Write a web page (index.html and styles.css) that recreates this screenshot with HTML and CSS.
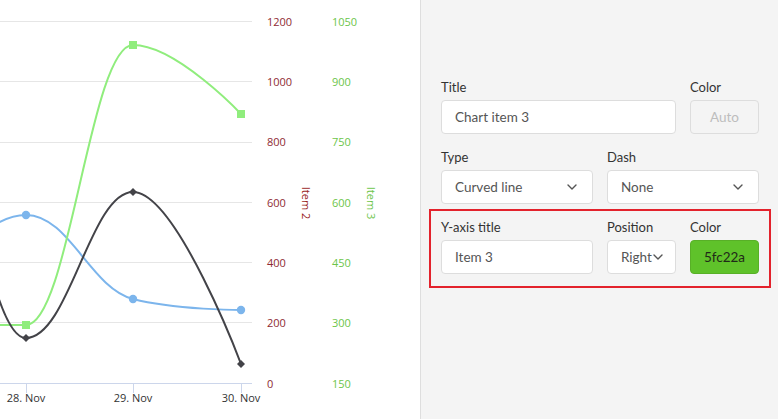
FILE: index.html
```html
<!DOCTYPE html>
<html>
<head>
<meta charset="utf-8">
<link rel="stylesheet" href="styles.css">
</head>
<body>
<div class="page">
  <div class="chart">
    <svg class="chart-svg" width="420" height="419" viewBox="0 0 420 419">
      <g class="grid">
        <line x1="0" y1="21.5" x2="252" y2="21.5"/>
        <line x1="0" y1="81.5" x2="252" y2="81.5"/>
        <line x1="0" y1="142.5" x2="252" y2="142.5"/>
        <line x1="0" y1="202.5" x2="252" y2="202.5"/>
        <line x1="0" y1="262.5" x2="252" y2="262.5"/>
        <line x1="0" y1="322.5" x2="252" y2="322.5"/>
      </g>
      <g class="axis">
        <line x1="0" y1="383.5" x2="252" y2="383.5"/>
        <line x1="26.5" y1="383" x2="26.5" y2="393"/>
        <line x1="133.5" y1="383" x2="133.5" y2="393"/>
        <line x1="241.5" y1="383" x2="241.5" y2="393"/>
      </g>
      <g class="xlabels">
        <text x="26" y="402">28. Nov</text>
        <text x="133" y="402">29. Nov</text>
        <text x="241" y="402">30. Nov</text>
      </g>
      <g class="ylabels y2">
        <text x="267" y="26">1200</text>
        <text x="267" y="86">1000</text>
        <text x="267" y="146">800</text>
        <text x="267" y="207">600</text>
        <text x="267" y="267">400</text>
        <text x="267" y="327">200</text>
        <text x="267" y="388">0</text>
      </g>
      <g class="ylabels y3">
        <text x="332" y="26">1050</text>
        <text x="332" y="86">900</text>
        <text x="332" y="146">750</text>
        <text x="332" y="207">600</text>
        <text x="332" y="267">450</text>
        <text x="332" y="327">300</text>
        <text x="332" y="388">150</text>
      </g>
      <text class="atitle t2" transform="translate(302 203) rotate(90)">Item 2</text>
      <text class="atitle t3" transform="translate(367 203) rotate(90)">Item 3</text>

      <path class="s-blue" d="M -81.5 270 C -38.5 270 -17 215 26 215 C 69 215 90.2 288 133 299 C 176.2 310 241 310 241 310"/>
      <path class="s-green" d="M -81.5 325 C -38.5 325 -17 325 26 325 C 69 325 90.2 45 133 45 C 176.2 45 241 114 241 114"/>
      <path class="s-black" d="M -81.5 55 C -38.5 55 -17 338 26 338 C 69 338 90.2 192 133 192 C 176.2 192 241 364 241 364"/>

      <g class="m-blue">
        <circle cx="26" cy="215" r="4.2"/>
        <circle cx="133" cy="299" r="4.2"/>
        <circle cx="241" cy="310" r="4.2"/>
      </g>
      <g class="m-green">
        <rect x="22" y="321" width="8" height="8"/>
        <rect x="129" y="41" width="8" height="8"/>
        <rect x="237" y="110" width="8" height="8"/>
      </g>
      <g class="m-black">
        <path d="M26 334 L30 338 L26 342 L22 338 Z"/>
        <path d="M133 188 L137 192 L133 196 L129 192 Z"/>
        <path d="M241 360 L245 364 L241 368 L237 364 Z"/>
      </g>
    </svg>
  </div>

  <div class="panel">
    <div class="form">
      <div class="field span2">
        <label class="lbl">Title</label>
        <div class="input">Chart item 3</div>
      </div>
      <div class="field">
        <label class="lbl">Color</label>
        <div class="input disabled">Auto</div>
      </div>

      <div class="field">
        <label class="lbl">Type</label>
        <div class="input select">Curved line
          <svg class="chev" width="10" height="6" viewBox="0 0 10 6"><path d="M1 1 L5 5 L9 1"/></svg>
        </div>
      </div>
      <div class="field span2">
        <label class="lbl">Dash</label>
        <div class="input select">None
          <svg class="chev" width="10" height="6" viewBox="0 0 10 6"><path d="M1 1 L5 5 L9 1"/></svg>
        </div>
      </div>

      <div class="highlight">
        <div class="field">
          <label class="lbl">Y-axis title</label>
          <div class="input">Item 3</div>
        </div>
        <div class="field">
          <label class="lbl">Position</label>
          <div class="input select narrow">Right<svg class="chev-inline" width="10" height="6" viewBox="0 0 10 6"><path d="M1 1 L5 5 L9 1"/></svg></div>
        </div>
        <div class="field">
          <label class="lbl">Color</label>
          <div class="input swatch">5fc22a</div>
        </div>
      </div>
    </div>
  </div>
</div>
</body>
</html>
```

FILE: styles.css
```css
* { box-sizing: border-box; }
html, body { margin: 0; padding: 0; }
body {
  width: 778px;
  height: 419px;
  overflow: hidden;
  background: #ffffff;
  font-family: "Lato", "Noto Sans", sans-serif;
}
.page {
  display: flex;
  height: 419px;
}
.chart {
  width: 420px;
  flex: none;
  background: #ffffff;
}
.chart-svg { display: block; }
.grid line { stroke: #e6e6e6; stroke-width: 1; }
.axis line { stroke: #ccd6eb; stroke-width: 1; }
.xlabels text {
  font-family: "Open Sans", "Liberation Sans", sans-serif;
  font-size: 11px;
  fill: #333333;
  text-anchor: middle;
}
.ylabels text {
  font-family: "Open Sans", "Liberation Sans", sans-serif;
  font-size: 11px;
}
.y2 text { fill: #8e2b33; }
.y3 text { fill: #6cc54a; }
.atitle {
  font-family: "Open Sans", "Liberation Sans", sans-serif;
  font-size: 11px;
  text-anchor: middle;
}
.t2 { fill: #9a1f1f; }
.t3 { fill: #6cc54a; }
.s-blue, .s-green, .s-black { fill: none; stroke-width: 2; stroke-linejoin: round; stroke-linecap: round; }
.s-blue { stroke: #7cb5ec; }
.s-green { stroke: #90ed7d; }
.s-black { stroke: #434348; }
.m-blue { fill: #7cb5ec; }
.m-green { fill: #90ed7d; }
.m-black { fill: #434348; }

.panel {
  flex: 1;
  background: #f4f4f4;
  border-left: 1px solid #dedede;
  padding: 80px 19px 0 20px;
}
.form {
  display: grid;
  grid-template-columns: 152px 69px 69px;
  column-gap: 14px;
  row-gap: 16px;
}
.field {
  display: flex;
  flex-direction: column;
  min-width: 0;
}
.span2 { grid-column: span 2; }
.lbl {
  font-size: 13px;
  line-height: 14px;
  color: #333333;
  margin-bottom: 6px;
  white-space: nowrap;
}
.input {
  height: 34px;
  background: #ffffff;
  border: 1px solid #dddddd;
  border-radius: 4px;
  padding: 0 13px;
  display: flex;
  align-items: center;
  font-size: 13.5px;
  color: #555555;
  white-space: nowrap;
  position: relative;
}
.input.disabled {
  background: #f4f4f4;
  color: #bdbdbd;
  justify-content: center;
}
.select { justify-content: space-between; }
.chev path, .chev-inline path {
  fill: none;
  stroke: #555555;
  stroke-width: 1.4;
  stroke-linecap: round;
  stroke-linejoin: round;
}
.chev { margin-right: 2px; }
.input.narrow {
  justify-content: flex-start;
  padding: 0 0 0 13px;
  overflow: hidden;
}
.chev-inline { margin-left: 1px; flex: none; }
.swatch {
  background: #5fc22a;
  border-color: #58b027;
  color: #1f2a18;
  justify-content: center;
}
.highlight {
  grid-column: 1 / -1;
  display: grid;
  grid-template-columns: 152px 69px 69px;
  column-gap: 14px;
  border: 2px solid #e3222c;
  margin: -11px -12px 0 -12px;
  padding: 9px 10px 12px 10px;
}
```
